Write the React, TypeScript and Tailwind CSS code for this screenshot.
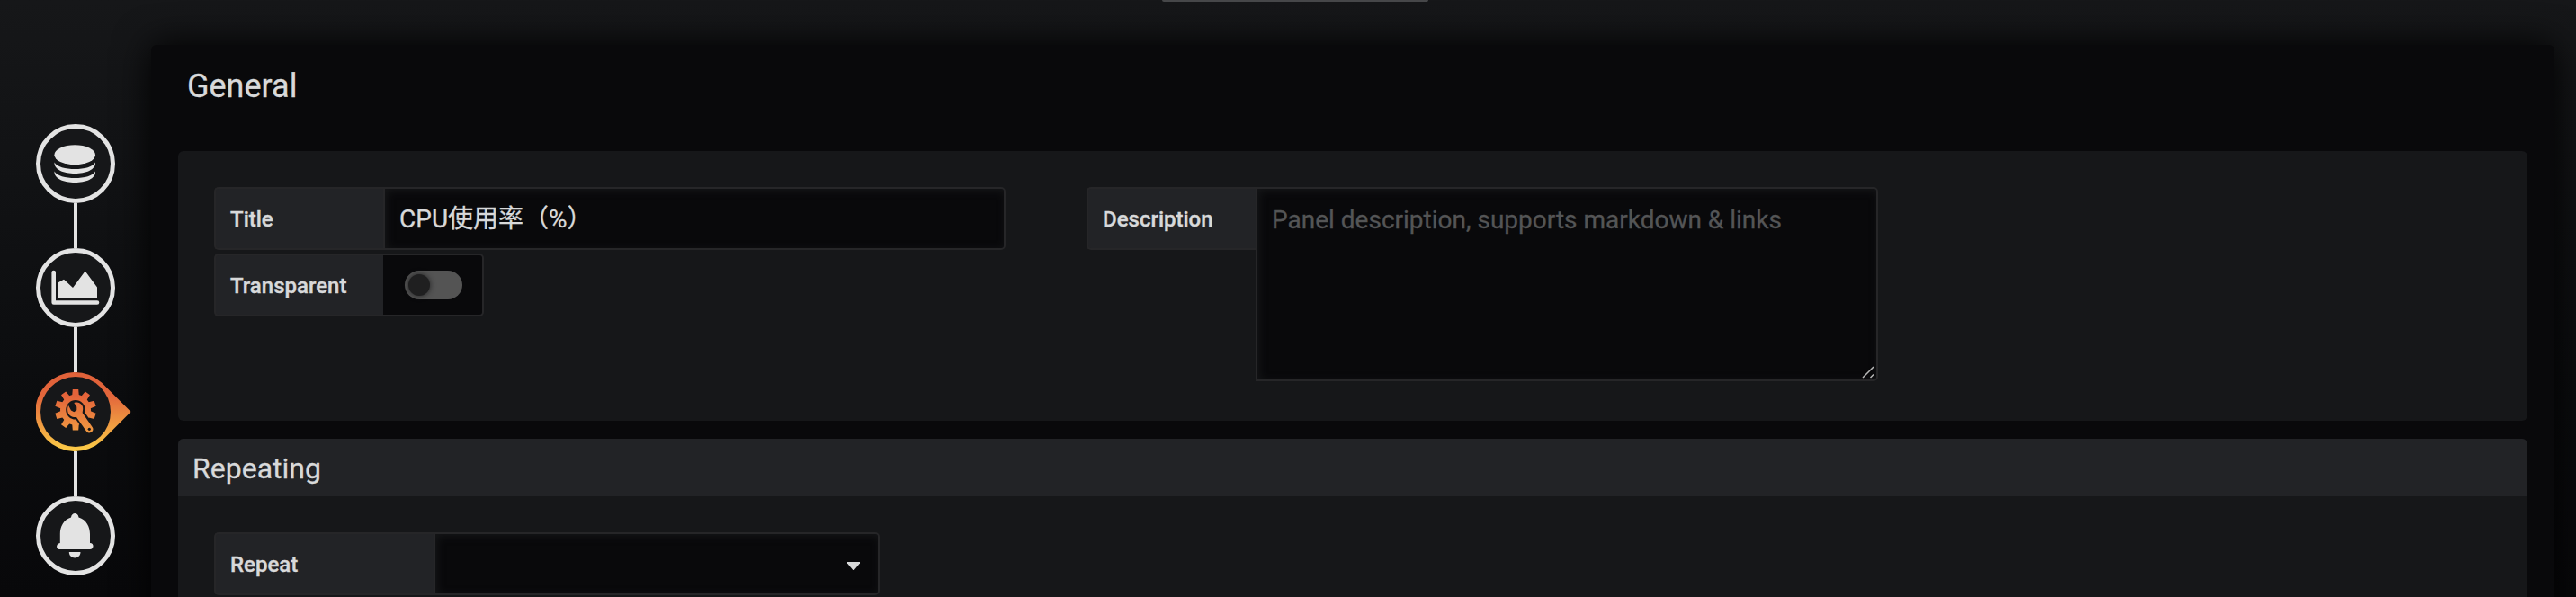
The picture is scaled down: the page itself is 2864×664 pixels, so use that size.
import React from "react";

const Ring = ({ children }: { children: React.ReactNode }) => (
  <div className="relative z-10 flex h-[88px] w-[88px] shrink-0 items-center justify-center rounded-full border-[5px] border-[#e3e3e3] bg-[#161719]">
    {children}
  </div>
);

const Link = () => <div className="h-[50px] w-1 shrink-0 bg-[#e3e3e3]" />;

const DatabaseIcon = () => (
  <svg className="h-[78px] w-[78px] shrink-0" viewBox="45 143 78 78" fill="#e3e3e3">
    <ellipse cx="83.2" cy="172.2" rx="22.8" ry="11" />
    <path d="M60.500 180.500C65 190.500 101.500 190.500 106 180.500C107.500 197.200 59 197.200 60.500 180.500Z" />
    <path d="M60.500 190.500C65 200.500 101.500 200.500 106 190.500C107.500 207.200 59 207.200 60.500 190.500Z" />
  </svg>
);

const ChartIcon = () => (
  <svg className="h-[78px] w-[78px] shrink-0" viewBox="45 281 78 78" fill="#e3e3e3">
    <path d="M59.700 303V336.500H108" fill="none" stroke="#e3e3e3" strokeWidth="4.600" strokeLinecap="round" strokeLinejoin="round" />
    <path d="M64.300 314.500L71 310.700L81 320L94.700 301.500L108 319.500V332H64.300Z" />
  </svg>
);

const BellIcon = () => (
  <svg className="h-[78px] w-[78px] shrink-0" viewBox="45 557 78 78" fill="#e3e3e3">
    <path d="M79 575.500C79.500 569.500 87 569.500 87.500 575.500C96 578 100 586 100 594V604C105 604 104.500 611 100 611H66C62 611 62 604.500 66.800 604V594C66.800 586 70.500 578 79 575.500Z" />
    <path d="M76.800 614H89.500C89.500 622.500 76.800 622.500 76.800 614Z" />
  </svg>
);

const TEETH = [0, 36, 72, 108, 180, 216, 252, 288, 324];

const GearStep = () => (
  <svg className="relative z-10 h-[88px] w-[106px] shrink-0" viewBox="40 414 106 88">
    <defs>
      <linearGradient id="flame" gradientUnits="userSpaceOnUse" x1="0" y1="414" x2="0" y2="502">
        <stop offset="0.1" stopColor="#e0623a" />
        <stop offset="0.3" stopColor="#e3663b" />
        <stop offset="0.97" stopColor="#fbc947" />
      </linearGradient>
      <linearGradient id="flameIcon" gradientUnits="userSpaceOnUse" x1="0" y1="433" x2="0" y2="502">
        <stop offset="0.1" stopColor="#e3633a" />
        <stop offset="1" stopColor="#f6b445" />
      </linearGradient>
    </defs>
    <path d="M113 425.500L145.500 458L113 490.500A44 44 0 1 1 113 425.500Z" fill="url(#flame)" />
    <circle cx="84" cy="458" r="39" fill="#161719" />
    <g fill="url(#flameIcon)">
      <circle cx="84" cy="455.800" r="17" />
      <path
        d={TEETH.map((a) => {
          const p = (r: number, d: number) => {
            const t = ((a + d) * Math.PI) / 180;
            return `${(84 + r * Math.sin(t)).toFixed(2)} ${(455.8 - r * Math.cos(t)).toFixed(2)}`;
          };
          return `M${p(15, -15)}L${p(23, -8)}L${p(23, 8)}L${p(15, 15)}Z`;
        }).join("")}
      />
    </g>
    <circle cx="84" cy="455.800" r="10.800" fill="#161719" />
    <path d="M87 459L99.300 477.300" stroke="#161719" strokeWidth="12.500" />
    <path
      d="M82.300 448C85 447.300 87 447.500 88.300 448.300C91 449.600 92.300 452 92.200 454.500C92.200 456.500 91.600 458 91.700 459.300L102.600 475A4 4 0 0 1 95.900 479.500L85 464C82.500 464.300 80.500 463.900 78.300 462.600C75 460 74.300 455 76 450.700L79 456.500L82.300 458.300L85.300 456.200L85.300 452.600Z"
      fill="url(#flameIcon)"
    />
    <circle cx="99.300" cy="477.300" r="1.600" fill="#161719" />
  </svg>
);

const Label = ({ width, children }: { width: string; children: React.ReactNode }) => (
  <div className={`${width} flex h-[70px] shrink-0 items-center rounded-l-[5px] border-2 border-r-0 border-[#262628] bg-[#222326] pl-4 pt-[2px] text-[24px] font-medium text-[#d8d9da] [-webkit-text-stroke:0.4px]`}>
    {children}
  </div>
);

export default function App() {
  return (
    <div className="relative flex h-[664px] w-[2864px] overflow-hidden bg-[linear-gradient(180deg,#161719_0px,#0b0c0e_450px,#08080a_664px)] font-[Roboto,'Noto_Sans_CJK_SC',sans-serif] text-[#d8d9da] [-webkit-text-stroke:0.3px]">
      <div className="absolute left-[1292px] top-0 h-[2px] w-[296px] rounded-b-[3px] bg-[#464749]" />
      <nav className="flex w-[168px] shrink-0 flex-col items-center pt-[138px]">
        <Ring><DatabaseIcon /></Ring>
        <Link />
        <Ring><ChartIcon /></Ring>
        <Link />
        <div className="z-10 flex w-[88px]"><GearStep /></div>
        <Link />
        <Ring><BellIcon /></Ring>
      </nav>
      <main className="mt-[50px] h-[700px] w-[2672px] shrink-0 rounded-[6px] bg-[#09090b] px-[30px] shadow-[0_0_40px_black]">
        <h1 className="flex h-[118px] items-start pl-[10px] pt-[24px] text-[36px] leading-[44px]">General</h1>
        <section className="flex h-[300px] rounded-[6px] bg-[#161719] px-10 pt-10">
          <div className="mr-[90px] w-[880px]">
            <div className="flex">
              <Label width="w-[188px]">Title</Label>
              <div className="flex h-[70px] flex-1 items-center rounded-r-[5px] border-2 border-[#262628] bg-[#09090b] pl-4 pt-[2px] text-[28px] shadow-[inset_2px_2px_10px_#161719]">CPU使用率（%）</div>
            </div>
            <div className="mt-1 flex">
              <Label width="w-[188px]">Transparent</Label>
              <div className="flex h-[70px] w-[112px] items-center rounded-r-[5px] border-2 border-l-0 border-[#262628] bg-[#09090b] pl-6">
                <div className="flex h-8 w-16 items-center rounded-full bg-[#545454] pl-1">
                  <div className="h-6 w-6 rounded-full bg-[#1f1f20] shadow-[0_0_6px_#1f1f20]" />
                </div>
              </div>
            </div>
          </div>
          <div className="flex">
            <Label width="w-[188px]">Description</Label>
            <div className="relative h-[216px] w-[692px] rounded-r-[5px] border-2 border-[#262628] bg-[#09090b] pl-4 pt-[17px] text-[28px] leading-[36px] text-[#545556] shadow-[inset_2px_2px_10px_#161719]">
              Panel description, supports markdown &amp; links
              <svg className="absolute bottom-[1px] right-[2px] h-[14px] w-[14px]" viewBox="0 0 14 14" stroke="#b8b8b8" strokeWidth="1.500">
                <path d="M1 13L13 1M9.500 13L13 9.500" />
              </svg>
            </div>
          </div>
        </section>
        <section className="mt-5 rounded-[6px] bg-[#161719]">
          <h2 className="flex h-16 items-center rounded-t-[6px] bg-[#222326] pl-4 pt-[2px] text-[32px]">Repeating</h2>
          <div className="flex h-[130px] px-10 pt-10">
            <Label width="w-[244px]">Repeat</Label>
            <div className="flex h-[70px] w-[496px] items-center justify-end rounded-r-[5px] border-2 border-[#262628] bg-[#09090b] pr-5 pt-[5px] shadow-[inset_2px_2px_10px_#161719]">
              <svg className="h-[9px] w-[14px]" viewBox="0 0 14 9" fill="#d8d9da"><path d="M0 0H14V1.500L7.700 9H6.300L0 1.500Z" /></svg>
            </div>
          </div>
        </section>
      </main>
    </div>
  );
}
